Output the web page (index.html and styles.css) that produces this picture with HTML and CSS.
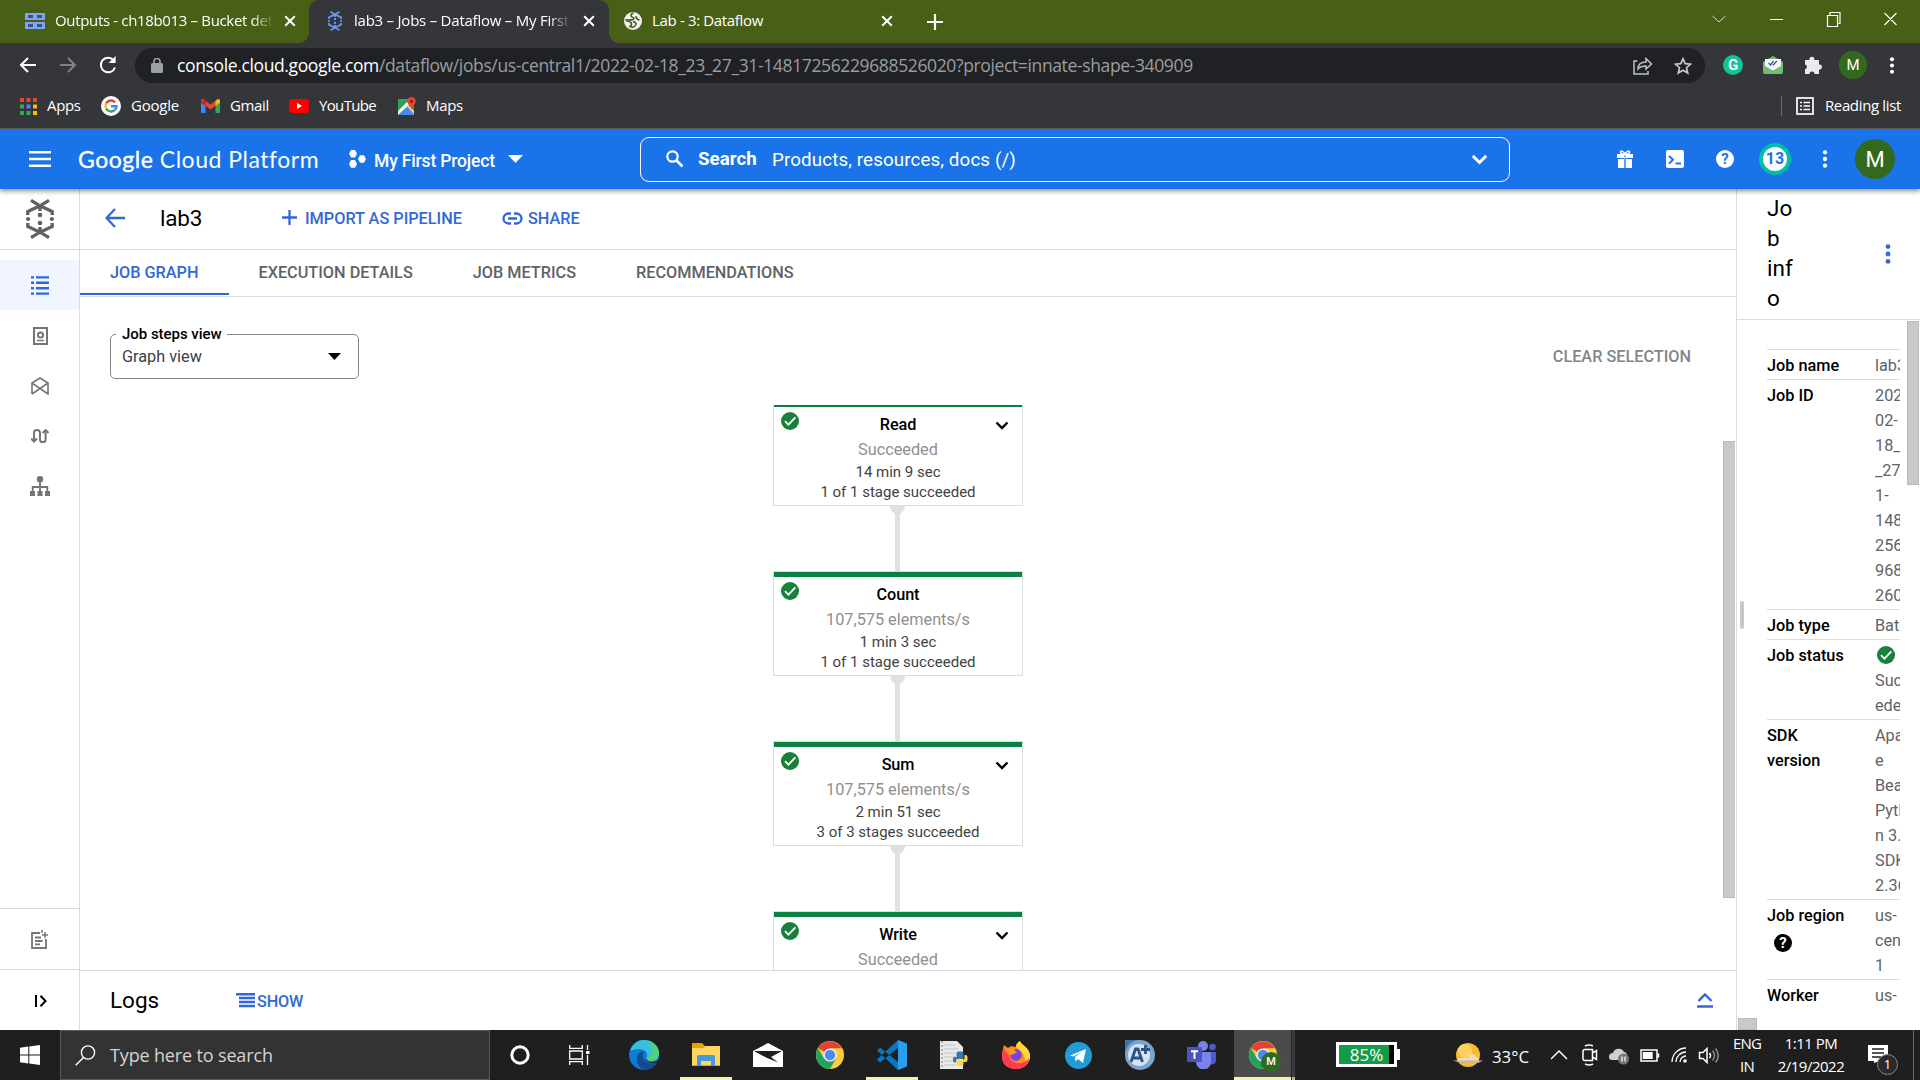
FILE: index.html
```html
<!DOCTYPE html>
<html lang="en">
<head>
<meta charset="utf-8">
<title>lab3 – Jobs – Dataflow</title>
<link rel="stylesheet" href="styles.css">
</head>
<body>
<svg class="defs" width="0" height="0">
  <symbol id="ok" viewBox="0 0 18 18"><circle cx="9" cy="9" r="9" fill="#188038"/><path d="M4 9.2l3.4 3.4L14.4 5.4" fill="none" stroke="#fff" stroke-width="1.8"/></symbol>
  <symbol id="x" viewBox="0 0 12 12"><path d="M1.2 1.2l9.6 9.6M10.8 1.2L1.2 10.8" stroke="#fff" stroke-width="2"/></symbol>
  <symbol id="chev" viewBox="0 0 14 9"><path d="M1.5 1.5L7 7l5.5-5.5" fill="none" stroke="currentColor" stroke-width="2.4"/></symbol>
  <symbol id="dots" viewBox="0 0 6 20"><g fill="currentColor"><circle cx="3" cy="2.6" r="2.4"/><circle cx="3" cy="10" r="2.4"/><circle cx="3" cy="17.4" r="2.4"/></g></symbol>
  <symbol id="flow" viewBox="0 0 28 40"><g fill="none" stroke="currentColor" stroke-width="3.3"><path d="M5 1.4L14 6.8 23 1.4M5 38.6L14 33.2l9 5.4"/><path d="M14 6.8L1.8 12.6V16M14 6.8l12.2 5.8V16M14 33.2L1.8 27.4V24M14 33.2l12.2-5.8V24M14 6.5V12M14 28v5.5"/></g><g fill="currentColor"><circle cx="2.1" cy="20" r="2.1"/><circle cx="25.9" cy="20" r="2.1"/><circle cx="14" cy="16" r="2.3"/><circle cx="14" cy="24" r="2.3"/></g></symbol>
  <symbol id="chrome" viewBox="0 0 28 28"><circle cx="14" cy="14" r="14" fill="#fdca40"/><path d="M14 14L1.9 7A14 14 0 0 1 26.1 7.3H14z" fill="#db4437"/><path d="M1.9 7A14 14 0 0 0 14 28l6-10.5L14 14 8 17.4z" fill="#1ea362"/><circle cx="14" cy="14" r="6.6" fill="#f1f1f1"/><circle cx="14" cy="14" r="5.2" fill="#4c8bf5"/></symbol>
</svg>

<header class="tabstrip">
  <div class="tab tab-one">
    <svg class="fav" width="20" height="16" viewBox="0 0 20 16"><g fill="#7fa5ee"><path d="M0 0h20v7H0zM0 9h20v7H0z"/></g><g fill="#3c4f88"><path d="M3 2h5v3H3zM12 2h5v3h-5zM3 11h5v3H3zM12 11h5v3h-5z"/></g></svg>
    <span class="tab-text fade">Outputs - ch18b013 – Bucket deta</span>
    <svg width="12" height="12"><use href="#x"/></svg>
  </div>
  <div class="tab tab-active">
    <svg class="fav blue" width="16" height="20"><use href="#flow"/></svg>
    <span class="tab-text fade">lab3 – Jobs – Dataflow – My First</span>
    <svg width="12" height="12"><use href="#x"/></svg>
  </div>
  <div class="tab tab-three">
    <svg class="fav" width="18" height="18" viewBox="0 0 18 18"><circle cx="9" cy="9" r="9" fill="#f1f3f4"/><path d="M9.500 1C6 2 6.500 5 9 5.500c1.500.4 1 2-.5 2.300-2 .3-3-.3-6.500.2 1 1.500 4 1 5 2.500s1 2.500-1 4c3 1.500 5 0 6-2 .8-1.600-1.500-2.500-3-3M12 4c0 2 1 3.500 3.500 4" fill="none" stroke="#495f15" stroke-width="1.600"/></svg>
    <span class="tab-text">Lab - 3: Dataflow</span>
    <svg width="12" height="12"><use href="#x"/></svg>
  </div>
  <svg class="plus" width="16" height="16" viewBox="0 0 16 16"><path d="M8 0v16M0 8h16" stroke="#fff" stroke-width="2.2"/></svg>
  <svg class="winctl" width="190" height="16" viewBox="0 0 190 16" fill="none" stroke="#fff"><path d="M6.500 5l6.500 6 6.500-6" stroke="#d5dacb"/><path d="M64 8.500h13M121.500 4.500h10v11h-10zM124 4V1.500h10v11h-2M178.500 2l12 12M190.500 2l-12 12" stroke-width="1.2"/></svg>
</header>

<div class="toolbar">
  <svg class="nav" width="96" height="20" viewBox="0 0 96 20" fill="none" stroke-width="2"><path d="M16 10H1M8 3l-7 7 7 7" stroke="#fff"/><path d="M40 10h15M48 3l7 7-7 7" stroke="#828386"/><path d="M93.500 5A7.300 7.300 0 1 0 95 12.500" stroke="#fff"/><path d="M95.600 1v7h-7z" fill="#fff"/></svg>
  <div class="omnibox">
    <svg width="12" height="15" viewBox="0 0 12 15"><rect y="5" width="12" height="10" rx="1.500" fill="#9aa0a6"/><path d="M3 6V3.500a3 3 0 0 1 6 0V6" fill="none" stroke="#9aa0a6" stroke-width="1.600"/></svg>
    <span class="url"><b>console.cloud.google.com</b>/dataflow/jobs/us-central1/2022-02-18_23_27_31-14817256229688526020?project=innate-shape-340909</span>
    <svg width="20" height="18" viewBox="0 0 20 18" fill="none" stroke="#bdc1c6" stroke-width="1.500"><path d="M4.500 4H1v13h14v-3M5 12c0-4.500 3-7 8-7V1.500L18.500 7 13 12V9c-3.500 0-6 .8-8 3z"/></svg>
    <svg width="18" height="18" viewBox="0 0 18 18" fill="none" stroke="#c5c8cc" stroke-width="1.700"><path d="M9 1.800l2.200 4.900 5.300.5-4 3.500 1.200 5.300L9 13.200 4.300 16l1.200-5.300-4-3.500 5.300-.5z"/></svg>
  </div>
  <span class="gram">G</span>
  <svg class="mailx" width="20" height="18" viewBox="0 0 20 18"><path d="M0 6L10 0l10 6v10a2 2 0 0 1-2 2H2a2 2 0 0 1-2-2z" fill="#6fbf73"/><path d="M2 3h16v7l-8 4.500L2 10z" fill="#f7f7fb"/><path d="M5.500 7l2 2 3-4M9.500 8.500l.8.500 3.500-4" fill="none" stroke="#4453b5" stroke-width="1.300"/></svg>
  <svg class="puzzle" width="19" height="19" viewBox="0 0 19 19"><path d="M1 4h4.500a2.500 2.500 0 1 1 4.800 0H15v4.600a2.500 2.500 0 1 1 0 4.900V18h-4.500a2.500 2.500 0 0 0-5 0H1v-4.800a2.400 2.400 0 0 0 0-4.700z" fill="#e8eaed"/></svg>
  <span class="avatar small">M</span>
  <svg class="white tdots" width="6" height="17"><use href="#dots"/></svg>
</div>

<div class="bookmarks">
  <svg width="17" height="17" viewBox="0 0 17 17"><path d="M0 0h4v4H0zM6.500 0h4v4h-4zM13 0h4v4h-4z" fill="#ea4335"/><path d="M0 6.500h4v4H0zM0 13h4v4H0zM6.500 13h4v4h-4z" fill="#34a853"/><path d="M6.500 6.500h4v4h-4z" fill="#4285f4"/><path d="M13 6.500h4v4h-4zM13 13h4v4h-4z" fill="#fbbc04"/></svg>
  <span class="bm bm-apps">Apps</span>
  <svg width="20" height="20" viewBox="0 0 20 20"><circle cx="10" cy="10" r="10" fill="#fff"/><g fill="none" stroke-width="2.500"><path d="M14 6.300A5.500 5.500 0 0 0 5.200 7.300" stroke="#ea4335"/><path d="M5.200 7.300a5.500 5.500 0 0 0 0 5.400" stroke="#fbbc04"/><path d="M5.200 12.700a5.500 5.500 0 0 0 8.400 1.400" stroke="#34a853"/><path d="M13.600 14.100A5 5 0 0 0 15.500 10.200H10" stroke="#4285f4"/></g></svg>
  <span class="bm bm-google">Google</span>
  <svg width="19" height="14" viewBox="0 0 19 14"><path d="M0 2v11a1 1 0 0 0 1 1h3.500V5z" fill="#4285f4"/><path d="M19 2v11a1 1 0 0 1-1 1h-3.500V5z" fill="#34a853"/><path d="M0 2C0 0 2 0 3 .7L9.500 5.500 16 .7C17 0 19 0 19 2l-.3 1.500L9.500 10.500.3 3.500z" fill="#ea4335"/><path d="M14.500 1.800L16 .7C17 0 19 0 19 2v1.500l-4.500 3.400z" fill="#fbbc04"/><path d="M0 2v1.500l4.500 3.400V1.800z" fill="#c5221f"/></svg>
  <span class="bm bm-gmail">Gmail</span>
  <svg width="20" height="14" viewBox="0 0 20 14"><rect width="20" height="14" rx="3.500" fill="#f00"/><path d="M8 4l5 3-5 3z" fill="#fff"/></svg>
  <span class="bm bm-yt">YouTube</span>
  <svg width="18" height="18" viewBox="0 0 18 18"><path d="M0 2h16v16H0z" fill="#2da05a"/><path d="M1 18L10 9l6 7v2z" fill="#4a89f3"/><path d="M0 14l9-9 2.500 2.500L0 18z" fill="#f5f5f5"/><path d="M9.500 10l1.500-1.500L16 14v3z" fill="#fdd663"/><path d="M13.500 0a4.200 4.200 0 0 1 4.200 4.200c0 3-3.400 4.300-4.200 8.300-.8-4-4.200-5.300-4.200-8.300A4.200 4.200 0 0 1 13.500 0z" fill="#ea4335"/><circle cx="13.500" cy="4.200" r="1.500" fill="#8c1a11"/></svg>
  <span class="bm">Maps</span>
  <div class="reading">
    <svg width="18" height="18" viewBox="0 0 18 18" fill="none" stroke="#fff" stroke-width="1.700"><rect x="1" y="1" width="16" height="16"/><path d="M4 5.500h2M4 9h2M4 12.500h2M7.500 5.500H14M7.500 9H14M7.500 12.500H14"/></svg>
    <span class="bm">Reading list</span>
  </div>
</div>

<div class="gcp">
  <svg width="22" height="16" viewBox="0 0 22 16"><path d="M0 1.300h22M0 8h22M0 14.700h22" stroke="#fff" stroke-width="2.400"/></svg>
  <span class="brand"><b>Google</b> Cloud Platform</span>
  <svg width="17" height="18" viewBox="0 0 17 18" fill="#fff"><path d="M2 0h4l2 3.800-2 3.800H2L0 3.800zM2 10h4l2 3.900-2 3.900H2L0 13.900zM11 5.200h4l2 3.800-2 3.800h-4L9 9z"/></svg>
  <span class="project">My First Project</span>
  <svg width="15" height="8" viewBox="0 0 15 8"><path d="M0 0h15L7.500 8z" fill="#fff"/></svg>
  <div class="search">
    <svg width="18" height="18" viewBox="0 0 18 18" fill="none" stroke="#fff"><circle cx="6.500" cy="6.500" r="5.200" stroke-width="2.200"/><path d="M10.500 10.500l6 6" stroke-width="2.600"/></svg>
    <b>Search</b><span>Products, resources, docs (/)</span>
    <svg class="white" width="17" height="11"><use href="#chev"/></svg>
  </div>
  <svg class="gift" width="16" height="18" viewBox="0 0 16 18"><path d="M0 4h16v4H0zM1 9h6.300v9H1zM8.700 9H15v9H8.700z" fill="#fff"/><path d="M8 5C5 4 3 3 3.500 1.800S7 1 8 4.500c1-3.500 4-3.900 4.500-2.700S11 4 8 5zM8 4v5" fill="none" stroke="#fff" stroke-width="1.500"/><path d="M7.600 5h.8v4h-.8z" fill="#1a73e8"/></svg>
  <svg class="shell" width="18" height="18" viewBox="0 0 18 18"><rect width="18" height="18" rx="2" fill="#fff"/><path d="M3 6l4 3.800-4 3.800M9.500 13.600H15" fill="none" stroke="#1a73e8" stroke-width="2"/></svg>
  <span class="help">?</span>
  <span class="count">13</span>
  <svg class="white gdots" width="6" height="18"><use href="#dots"/></svg>
  <span class="avatar big">M</span>
</div>

<main class="app">
  <nav class="side">
    <div class="side-head"><svg width="28" height="40"><use href="#flow"/></svg></div>
    <div class="side-list">
      <a class="on"><svg width="18" height="19" viewBox="0 0 18 19"><path d="M0 1.400h3M5 1.400h13M0 6.800h3M5 6.800h13M0 12.200h3M5 12.200h13M0 17.600h3M5 17.600h13" stroke="#3367d6" stroke-width="2.400"/></svg></a>
      <a><svg width="15" height="18" viewBox="0 0 15 18" fill="none" stroke="#757575" stroke-width="2"><path d="M1 1h13v16H1z"/><circle cx="7.500" cy="8" r="2.600"/><path d="M4 13.500h7" stroke-width="1.500"/></svg></a>
      <a><svg width="18" height="18" viewBox="0 0 18 18" fill="none" stroke="#757575" stroke-width="1.600"><path d="M1 17V6l8-5 8 5v11l-16-11M17 6L1 17"/></svg></a>
      <a><svg width="18" height="14" viewBox="0 0 18 14" fill="none" stroke="#757575" stroke-width="2"><path d="M3 13V4.500M3 11.500V4a3 3 0 0 1 6 0v6.500a2.800 2.800 0 0 0 5.600 0V2"/><path d="M0 9.500l3 3 3-3M11.600 4l3-3 3 3"/></svg></a>
      <a><svg width="20" height="20" viewBox="0 0 20 20"><g fill="#757575"><circle cx="10" cy="3.200" r="3.200"/><path d="M0 15h5v5H0zM7.500 15h5v5h-5zM15 15h5v5h-5z"/></g><path d="M10 4v12M2.700 16v-5h14.600v5" fill="none" stroke="#757575" stroke-width="1.800"/></svg></a>
    </div>
    <div class="side-notes"><svg width="17" height="19" viewBox="0 0 17 19" fill="none" stroke="#757575" stroke-width="1.800"><path d="M9 3H1v15h14V9M4 7.500h6M4 11h7.500M4 14.300h5"/><path d="M14 2v6M11 5h6M11 0v3" stroke-width="1.500"/></svg></div>
    <div class="side-toggle"><svg width="12" height="12" viewBox="0 0 12 12" fill="none" stroke="#000" stroke-width="2"><path d="M1 0v12M5.500.800l5 5.200-5 5.200"/></svg></div>
  </nav>

  <section class="center">
    <div class="titlebar">
      <svg width="20" height="20" viewBox="0 0 20 20" fill="none" stroke="#3367d6" stroke-width="2.300"><path d="M20 10H1.500M10 1L1.500 10 10 19"/></svg>
      <h1>lab3</h1>
      <svg width="15" height="15" viewBox="0 0 15 15"><path d="M7.500 0v15M0 7.500h15" stroke="#3367d6" stroke-width="2.300"/></svg>
      <span class="act act-import">IMPORT AS PIPELINE</span>
      <svg width="21" height="13" viewBox="0 0 21 13" fill="none" stroke="#3367d6" stroke-width="2.300"><path d="M9 1.500H6.500a5 5 0 0 0 0 10H9M12 1.500h2.500a5 5 0 0 1 0 10H12M6 6.500h9"/></svg>
      <span class="act">SHARE</span>
    </div>
    <div class="tabs"><span class="sel">JOB GRAPH</span><span>EXECUTION DETAILS</span><span>JOB METRICS</span><span>RECOMMENDATIONS</span></div>
    <div class="controls">
      <div class="select"><label>Job steps view</label><span>Graph view</span><svg width="13" height="7" viewBox="0 0 13 7"><path d="M0 0h13L6.500 7z"/></svg></div>
      <span class="clear">CLEAR SELECTION</span>
    </div>
    <div class="canvas">
      <div class="graph">
        <div class="node"><svg class="ok" width="18" height="18"><use href="#ok"/></svg><h2>Read</h2><svg class="chev" width="14" height="9"><use href="#chev"/></svg><p class="muted">Succeeded</p><p>14 min 9 sec</p><p>1 of 1 stage succeeded</p></div>
        <div class="link"></div>
        <div class="node"><svg class="ok" width="18" height="18"><use href="#ok"/></svg><h2>Count</h2><p class="muted">107,575 elements/s</p><p>1 min 3 sec</p><p>1 of 1 stage succeeded</p></div>
        <div class="link"></div>
        <div class="node"><svg class="ok" width="18" height="18"><use href="#ok"/></svg><h2>Sum</h2><svg class="chev" width="14" height="9"><use href="#chev"/></svg><p class="muted">107,575 elements/s</p><p>2 min 51 sec</p><p>3 of 3 stages succeeded</p></div>
        <div class="link"></div>
        <div class="node"><svg class="ok" width="18" height="18"><use href="#ok"/></svg><h2>Write</h2><svg class="chev" width="14" height="9"><use href="#chev"/></svg><p class="muted">Succeeded</p></div>
      </div>
      <div class="vscroll"></div>
    </div>
    <div class="logs">
      <h1>Logs</h1>
      <svg width="19" height="15" viewBox="0 0 19 15"><path d="M0 1.200h19M3 5h16M3 9h16M3 13h16" stroke="#3367d6" stroke-width="2.500"/></svg>
      <span class="act">SHOW</span>
      <svg class="collapse" width="16" height="16" viewBox="0 0 16 16" fill="none" stroke="#3367d6" stroke-width="2.400"><path d="M1.500 9L8 2.500 14.500 9M0 14.500h16"/></svg>
    </div>
  </section>

  <aside class="info">
    <div class="info-head"><h1>Jo<br>b<br>inf<br>o</h1><svg width="6" height="20"><use href="#dots"/></svg></div>
    <div class="info-body">
      <div class="grip"></div>
      <dl>
        <div><dt>Job name</dt><dd>lab3</dd></div>
        <div><dt>Job ID</dt><dd>2022-<br>02-<br>18_23<br>_27_3<br>1-<br>14817<br>25622<br>96885<br>26020</dd></div>
        <div><dt>Job type</dt><dd>Batch</dd></div>
        <div><dt>Job status</dt><dd><svg width="18" height="18"><use href="#ok"/></svg><br>Succe<br>eded</dd></div>
        <div><dt>SDK<br>version</dt><dd>Apach<br>e<br>Beam<br>Pytho<br>n 3.7<br>SDK<br>2.36.0</dd></div>
        <div><dt>Job region<br><i>?</i></dt><dd>us-<br>central<br>1</dd></div>
        <div><dt>Worker</dt><dd>us-</dd></div>
      </dl>
      <div class="iscroll"></div>
    </div>
    <div class="hscroll"></div>
  </aside>
</main>

<footer class="taskbar">
  <svg class="win" width="20" height="20" viewBox="0 0 20 20" fill="#fff"><path d="M0 2.800l8.300-1.200v8H0zM9.300 1.400L20 0v9.600H9.300zM0 10.500h8.300v8L0 17.300zM9.300 10.500H20V20L9.300 18.600z"/></svg>
  <div class="find"><svg width="21" height="21" viewBox="0 0 21 21" fill="none" stroke="#fff" stroke-width="1.400"><circle cx="13" cy="7.500" r="6.600"/><path d="M8.500 12.500L.7 20.300"/></svg><span>Type here to search</span></div>
  <svg class="i-cortana" width="20" height="20" viewBox="0 0 20 20"><circle cx="10" cy="10" r="8.200" fill="none" stroke="#fff" stroke-width="3"/></svg>
  <svg class="i-view" width="21" height="20" viewBox="0 0 21 20" fill="none" stroke="#fff" stroke-width="1.300"><path d="M.7 0v3.300h12.600V0M.7 20v-3.300h12.600V20M.7 6h12.600v8H.7zM18.500 0v5M18.500 10v10"/><path d="M17 6h3.500v3H17z" fill="#fff" stroke="none"/></svg>
  <div class="slot"><svg width="30" height="30" viewBox="0 0 30 30"><circle cx="15" cy="15" r="15" fill="#0c7bd3"/><path d="M1 11C4 3 9 0 15 0c9 0 15 6 15 13 0 6-4 8-8 8-4 0-5-2-4-4 1-4-2-8-8-8-4 0-7 1-9 2z" fill="#35c1dc"/><path d="M19 .6C26 3 30 8 30 13c0 6-4 8-8 8-4 0-5-2-4-4 6-1 8-6 1-16.400z" fill="#5bd45b" opacity=".75"/><path d="M28 22c-5 3-13 1-14-5-1-3 1-5 3-5-5-2-9 2-9 7 0 6 4 10 8 11 5 0 9-2 12-8z" fill="#134b94"/><path d="M29 22c-4 2-12 1-13-4 1 2 4 4 7 4 3 0 5-.7 6.500-2z" fill="#1f1f1f"/></svg></div>
  <div class="slot run"><svg width="28" height="24" viewBox="0 0 28 24"><path d="M0 0h10l3 3H28v20H0z" fill="#e8a200"/><path d="M0 5h11l3-2h14v19H0z" fill="#ffd661"/><path d="M5 23V14a2 2 0 0 1 2-2h14a2 2 0 0 1 2 2v9h-4v-5H9v5z" fill="#4599dc"/></svg></div>
  <div class="slot"><svg width="30" height="24" viewBox="0 0 30 24"><path d="M0 8L15 0l15 8v16H0z" fill="#fff"/><path d="M1 8h28L18 14l7 5.500L13 14.500z" fill="#1f1f1f"/></svg></div>
  <div class="slot"><svg width="28" height="28"><use href="#chrome"/></svg></div>
  <div class="slot run"><svg width="30" height="30" viewBox="0 0 30 30"><path d="M0 19.500L21 0v8L3 22.500zM0 10.500L21 30v-8L3 7.500z" fill="#0a76bd"/><path d="M21 0l9 3.500v23L21 30z" fill="#2a9df1"/></svg></div>
  <div class="slot"><svg width="28" height="28" viewBox="0 0 28 28"><path d="M0 0h17l6 6v22H0z" fill="#e9e9e9"/><path d="M3 4h12M4 8h14M4 12h11M4 16h9M4 20h9M4 24h12" stroke="#c4c4c4"/><path d="M2 0v28" stroke="#777" stroke-dasharray="2 2"/><path d="M16.500 16.500v-4a2 2 0 0 1 2-2h3a2 2 0 0 1 2 2v4a1.500 1.500 0 0 1-1.500 1.500h-4a2 2 0 0 0-2 2v1.500h-1a2 2 0 0 1-2-2v-2a2 2 0 0 1 2-2z" fill="#3a76a8"/><path d="M24.500 14h1a2 2 0 0 1 2 2v3a2 2 0 0 1-2 2h-2v2a2 2 0 0 1-2 2h-3a2 2 0 0 1-2-2v-2.500a1.500 1.500 0 0 1 1.500-1.500H22a2.500 2.500 0 0 0 2.500-2.500z" fill="#ffd33f"/></svg></div>
  <div class="slot"><svg width="28" height="28" viewBox="0 0 28 28"><path d="M2 4l4 3C8 5 11 5 14 6c0-3 2-5 4-6 1 4 9 6 10 14 1 8-6 14-14 14S0 22 0 15c0-4 1-8 2-11z" fill="#ff8a1e"/><path d="M18 0c1 4 9 6 10 14 0 5-2 8-5 11 1-7-1-14-9-19 0-3 2-5 4-6z" fill="#ffd83a"/><path d="M0 16c0 8 6 12 14 12s13-5 13-11c-4 7-18 8-20-3-4-3-5-5-5-8-1 3-2 6-2 10z" fill="#ff3b54"/><circle cx="14" cy="14" r="5.800" fill="#7542e5"/><path d="M6 8c4-1 7 1 9 4-3 0-5 3-8 1z" fill="#ff9a22"/></svg></div>
  <div class="slot"><svg width="27" height="27" viewBox="0 0 27 27"><circle cx="13.500" cy="13.500" r="13.500" fill="#239bd7"/><path d="M5 13.500L21 7l-3 14-5-4-2.500 2.500-.5-4.500 7-5.500-8.500 5z" fill="#fff"/></svg></div>
  <div class="slot"><svg width="30" height="30" viewBox="0 0 30 30"><path d="M0 0h15v15H0z" fill="#3d78ad"/><circle cx="15" cy="15" r="15" fill="#7da4cf"/><circle cx="14" cy="15" r="11" fill="#d7e3f1"/><path d="M6 22l4.500-13h2.500l4.500 13M8 18h7.500M16 9.500h9M20.500 5v9" fill="none" stroke="#27528a" stroke-width="2.800"/></svg></div>
  <div class="slot"><svg width="30" height="28" viewBox="0 0 30 28"><circle cx="16" cy="5" r="5" fill="#7b83eb"/><circle cx="25.500" cy="6" r="3.300" fill="#5059c9"/><path d="M20 11h9v8c0 5-5 5-7 4z" fill="#5059c9"/><path d="M9 11h15v10a7.500 7.500 0 0 1-15 0z" fill="#7b83eb"/><rect y="6" width="15" height="15" rx="1" fill="#4b53bc"/><path d="M4 10.300h7M7.500 10v8" stroke="#fff" stroke-width="1.900"/></svg></div>
  <div class="slot current"><svg width="28" height="28"><use href="#chrome"/></svg><span class="mini">M</span></div>
  <div class="edge"></div>
  <div class="battery"><span>85%</span></div>
  <svg class="i-sun" width="30" height="26" viewBox="0 0 30 26"><circle cx="15" cy="13" r="12" fill="#fdb92e"/><circle cx="12" cy="9" r="7" fill="#ffd25e"/><path d="M6 16h10a3.500 3.500 0 0 1 7-1c3 0 4 3 2 4H6c-2 0-2-3 0-3z" fill="#f3dcb8"/><path d="M0 18.500h30l-5 2.500H8z" fill="#cdb79b"/></svg>
  <span class="temp">33°C</span>
  <svg class="i-tray" width="168" height="24" viewBox="0 0 168 24" fill="none" stroke="#fff" stroke-width="1.500"><path d="M0 16l8-8 8 8"/><path d="M34 6.500h7.500v11H34a2 2 0 0 1-2-2v-7a2 2 0 0 1 2-2zM41.500 10l4-2.500v9l-4-2.500M34 3q4-2 8 0M34 21q4 2 8 0"/><path d="M58 14a4 4 0 0 1 4-4 6 6 0 0 1 11-1c4 0 4 8 0 8H61c-2 0-3-1-3-3z" fill="#d0d0d0" stroke="none"/><circle cx="72.500" cy="16" r="5.500" fill="#777" stroke="none"/><path d="M71 13.500v5M74 13.500v5" stroke-width="1.200"/><path d="M90 7h16v11H90zM107.500 10.500v4"/><path d="M91.700 9h10v7h-10z" fill="#fff" stroke="none"/><path d="M121 19A14 14 0 0 1 135 5M125 19a10 10 0 0 1 10-10M129 19a6 6 0 0 1 6-6" stroke-width="1.300"/><circle cx="134" cy="18" r="1.800" fill="#fff" stroke="none"/><path d="M148.500 9.500h3.500l4-4v14l-4-4h-3.500zM158.500 10q2 2.500 0 5"/><path d="M161.500 7.500q4 5 0 10M164.500 5.500q5.500 7 0 14" stroke="#888"/></svg>
  <div class="lang">ENG<br>IN</div>
  <div class="clock">1:11 PM<br>2/19/2022</div>
  <div class="note"><svg width="20" height="18" viewBox="0 0 20 18"><path d="M0 0h20v16h-9l-5 2v-2H0z" fill="#fff"/><path d="M4 4h12M4 8h12M4 12h9" stroke="#1f1f1f" stroke-width="1.500"/></svg><span>1</span></div>
</footer>
</body>
</html>
```
FILE: styles.css
```css
* { box-sizing: border-box; }
body { margin: 0; width: 1920px; height: 1080px; overflow: hidden; background: #fff; font-family: Roboto, sans-serif; font-size: 16.25px; color: #000; display: flex; flex-direction: column; }
svg { display: block; flex: none; }
svg.defs { position: absolute; }
h1, h2, p, dl, dd { margin: 0; font-weight: 400; }
b { font-weight: inherit; }
.white { color: #fff; }
.blue { color: #6f9bf5; }

/* browser tabs */
.tabstrip { height: 43px; flex: none; background: #495f15; display: flex; align-items: center; color: #fff; font: 15px "Open Sans", sans-serif; letter-spacing: -.34px; }
.tab { height: 43px; display: flex; align-items: center; padding-bottom: 1px; white-space: nowrap; }
.tab-one { width: 309px; padding-left: 25px; }
.tab-one .tab-text { width: 219px; margin: 0 10px 0 10px; }
.tab-active { width: 300px; padding-left: 18px; background: #35363a; border-radius: 10px 10px 0 0; position: relative; }
.tab-active::before, .tab-active::after { content: ""; position: absolute; bottom: 0; width: 10px; height: 10px; }
.tab-active::before { left: -10px; background: radial-gradient(circle at 0 0, #495f15 9.500px, #35363a 10px); }
.tab-active::after { right: -10px; background: radial-gradient(circle at 100% 0, #495f15 9.500px, #35363a 10px); }
.tab-active .tab-text { width: 217px; margin: 0 12px 0 11px; letter-spacing: -.23px; }
.tab-three { width: 298px; padding-left: 15px; position: relative; }
.tab-three::after { content: ""; width: 1px; height: 25px; background: #8a9870; margin-left: 14px; }
.tab-three .tab-text { width: 218px; margin: 0 11px 0 10px; }
.tab-text { overflow: hidden; flex: none; padding-bottom: 2px; }
.fade { -webkit-mask-image: linear-gradient(90deg, #000 90%, transparent); mask-image: linear-gradient(90deg, #000 90%, transparent); }
.plus { margin-left: 20px; }
.winctl { margin-left: 763px; margin-bottom: 6px; overflow: visible; }

/* address row */
.toolbar { height: 44px; flex: none; background: #35363a; display: flex; align-items: center; }
.nav { margin: 0 19px 0 20px; }
.omnibox { width: 1570px; height: 35px; border-radius: 18px; background: #202124; display: flex; align-items: center; padding: 0 13px 0 16px; margin: 1px 0 0; }
.url { flex: 1; padding: 0 0 1px 14px; color: #9a9da1; font: 17.5px "Open Sans", sans-serif; letter-spacing: -.368px; white-space: nowrap; }
.url b { color: #fff; }
.omnibox svg + svg { margin-left: 21px; }
.gram { width: 20px; height: 20px; margin-left: 18px; border-radius: 50%; background: #15c39a; color: #fff; font: 600 15px/20px Roboto, sans-serif; text-align: center; }
.mailx { margin-left: 20px; }
.puzzle { margin-left: 21px; }
.avatar { border-radius: 50%; background: #33691e; color: #fff; text-align: center; flex: none; }
.small { width: 28px; height: 28px; font-size: 15px; line-height: 28px; margin-left: 16px; }
.tdots { margin-left: 22px; }

.bookmarks { height: 42px; flex: none; background: #35363a; border-bottom: 1px solid #5c5d60; display: flex; align-items: center; padding-left: 20px; padding-bottom: 3px; color: #fff; font: 15px "Open Sans", sans-serif; letter-spacing: -.35px; }
.bm { margin-left: 10px; padding-bottom: 2px; white-space: nowrap; }
.bm-apps { width: 54px; }
.bm-google { width: 70px; letter-spacing: -.22px; }
.bm-gmail { width: 59px; }
.bm-yt { width: 79px; letter-spacing: -.65px; }
.reading { margin: 0 19px 0 auto; height: 20px; border-left: 1px solid #6b6c6f; padding-left: 14px; display: flex; align-items: center; }
.reading .bm { margin-left: 11px; }

/* console header */
.gcp { height: 60px; flex: none; background: #1a73e8; color: #fff; display: flex; align-items: center; padding-left: 29px; box-shadow: 0 2px 5px rgba(0,0,0,.45); position: relative; z-index: 2; }
.brand { width: 243px; margin: 0 28px 0 27px; font: 23px Lato, sans-serif; letter-spacing: .52px; white-space: nowrap; }
.brand b { font-weight: 400; -webkit-text-stroke: .4px #fff; }
.project { width: 122px; margin: 4px 12px 0 8px; font-size: 17.5px; font-weight: 500; letter-spacing: -.16px; white-space: nowrap; }
.search { width: 870px; height: 45px; margin-left: 117px; border: 1px solid #fff; border-radius: 9px; display: flex; align-items: center; padding: 0 21px 0 25px; font-size: 18.750px; white-space: nowrap; }
.search b { font-weight: 700; margin: 0 16px 0 14px; width: 58px; }
.search span { flex: 1; letter-spacing: .12px; padding-top: 2px; }
.gift { margin-left: 107px; }
.shell { margin-left: 33px; }
.help { width: 18px; height: 18px; margin-left: 32px; background: #fff; color: #1a73e8; border-radius: 50%; font: 700 15px/18px Roboto, sans-serif; text-align: center; }
.count { width: 32px; height: 32px; margin-left: 25px; border: 4px solid #00bfa5; border-radius: 50%; background: #fff; color: #1a73e8; font: 700 16px/24px Roboto, sans-serif; text-align: center; }
.gdots { margin-left: 31px; }
.big { width: 40px; height: 40px; margin-left: 27px; font-size: 22px; line-height: 41px; }

/* page body */
.app { height: 841px; flex: none; display: grid; grid-template-columns: 80px 1656px 184px; }
.side { border-right: 1px solid #dadce0; display: flex; flex-direction: column; }
.side > div { display: flex; align-items: center; justify-content: center; }
.side-head { height: 61px; border-bottom: 1px solid #dadce0; color: #616161; }
.side .side-list { flex: 1; flex-direction: column; justify-content: flex-start; padding-top: 10px; }
.side-list a { width: 79px; height: 50px; display: flex; align-items: center; justify-content: center; padding: 1px 0 0 1px; }
.side-list .on { background: #f0f5ff; }
.side-notes { height: 62px; border: solid #dadce0; border-width: 1px 0; }
.side-toggle { height: 60px; padding: 2px 0 0 3px; }
.center { display: flex; flex-direction: column; min-width: 0; }
.titlebar { height: 61px; border-bottom: 1px solid #dadce0; display: flex; align-items: center; padding: 0 0 2px 25px; white-space: nowrap; }
h1 { font-size: 22.500px; line-height: 30px; }
.titlebar h1 { width: 87px; margin-left: 35px; letter-spacing: -.2px; }
.titlebar h1 + svg { margin-left: 35px; margin-top: -2px; }
.act { color: #3367d6; font-weight: 500; margin-left: 8px; }
.act-import { width: 157px; margin-right: 40px; }
.titlebar .act:last-child { margin-left: 5px; }
.tabs { height: 47px; border-bottom: 1px solid #dadce0; display: flex; color: #5f6368; font-weight: 500; line-height: 46px; white-space: nowrap; }
.tabs span { padding: 0 30px; height: 46px; }
.tabs .sel { color: #3367d6; box-shadow: inset 0 -2px #3367d6; height: 45px; }
.controls { height: 108px; display: flex; justify-content: space-between; padding: 37px 45px 0 30px; }
.select { width: 249px; height: 45px; border: 1px solid #80868b; border-radius: 5px; display: flex; align-items: center; justify-content: space-between; padding: 0 17px 0 11px; color: #3c4043; position: relative; }
.select label { position: absolute; left: 5px; top: -11px; padding: 0 5px 0 6px; background: #fff; color: #000; font-size: 15px; font-weight: 500; line-height: 20px; letter-spacing: -.03px; }
.clear { color: #80868b; font-weight: 500; line-height: 46px; }
.canvas { height: 565px; overflow: hidden; display: flex; justify-content: space-between; padding-left: 693px; }
.graph { margin-top: -4px; width: 250px; }
.node { height: 105px; border: 1px solid #dadce0; background: #fff; text-align: center; position: relative; box-shadow: inset 0 5px #0b8043; line-height: 20px; padding-top: 12px; font-size: 15px; color: #424242; white-space: nowrap; }
.node h2 { font-size: 16.250px; font-weight: 500; line-height: 22px; color: #000; letter-spacing: -.1px; }
.node .muted { font-size: 16.250px; line-height: 28px; margin-bottom: -2px; color: #8f8f8f; }
.node .ok { position: absolute; left: 7px; top: 10px; }
.node .chev { position: absolute; right: 13px; top: 19px; color: #000; }
.link { height: 65px; width: 5px; margin: 0 0 0 122px; background: #e0e0e0; position: relative; }
.link::before { content: ""; position: absolute; left: -5px; top: 0; width: 15px; height: 7.500px; border-radius: 0 0 8px 8px; background: #e0e0e0; }
.vscroll { width: 12px; height: 457px; margin: 36px 1px 0 0; background: #c9c9c9; border: 1px solid #bababa; border-width: 1px 0 1px 1px; }
.logs { height: 60px; border-top: 1px solid #dadce0; display: flex; align-items: center; padding: 0 23px 0 30px; }
.logs h1 { width: 126px; padding-bottom: 2px; }
.logs .act { margin-left: 2px; padding-top: 2px; letter-spacing: -.2px; }
.collapse { margin-left: auto; margin-top: -2px; }

/* job info */
.info { border-left: 1px solid #dadce0; overflow: hidden; display: flex; flex-direction: column; }
.info-head { height: 131px; flex: none; border-bottom: 1px solid #dadce0; display: flex; justify-content: space-between; align-items: center; padding: 0 29px 1px 30px; color: #3367d6; }
.info-head h1 { color: #000; padding-bottom: 2px; }
.info-body { height: 697px; flex: none; display: grid; grid-template-columns: 30px 133px 20px; }
.grip { width: 4px; height: 28px; border-radius: 2px; background: #c8c8c8; margin: 281px 0 0 3px; }
dl { margin-top: 29px; height: 665px; overflow: hidden; font-size: 16.250px; line-height: 25px; }
dl div { display: grid; grid-template-columns: 108px 25px; border-top: 1px solid #dadce0; padding: 3px 0 1px; }
dt { font-weight: 500; }
dd { color: #5f6368; overflow: hidden; white-space: nowrap; }
dd svg { display: inline-block; vertical-align: -3px; margin-left: 2px; }
dt i { display: inline-block; width: 18px; height: 18px; margin: 6px 0 0 7px; border-radius: 50%; background: #000; color: #fff; font: 700 15px/18px Roboto, sans-serif; text-align: center; vertical-align: top; }
.iscroll { width: 12px; height: 164px; margin: 1px 0 0 7px; background: #c9c9c9; border: 1px solid #bababa; }
.hscroll { width: 19px; height: 12px; margin: 1px 0 0 1px; background: #c9c9c9; border: 1px solid #bababa; }

/* taskbar */
.taskbar { height: 50px; flex: none; background: #1f1f1f; color: #fff; display: flex; align-items: center; font: 15px "Open Sans", sans-serif; white-space: nowrap; }
.win { margin: 0 20px; }
.find { width: 430px; height: 50px; background: #333; border: 1px solid #5a5a5a; display: flex; align-items: center; padding-left: 14px; color: #d4d4d4; font-size: 18px; letter-spacing: -.15px; }
.find span { margin-left: 14px; }
.i-cortana { margin-left: 20px; }
.i-view { margin: 0 28px 0 39px; }
.slot { width: 52px; height: 50px; margin-right: 10px; display: flex; align-items: center; justify-content: center; flex: none; position: relative; }
.run, .current { box-shadow: inset 0 -3px #eff5b0; }
.current { width: 57px; background: #4b4b4b; margin: 0 0 0 -4px; }
.mini { position: absolute; left: 27px; top: 22px; width: 20px; height: 20px; border-radius: 50%; background: #33691e; font: 500 11px/20px Roboto, sans-serif; text-align: center; }
.edge { width: 4px; height: 50px; background: #3b3b3b; border-left: 1px solid #242424; box-shadow: inset 0 -3px #b6bb8b; }
.battery { width: 61px; height: 25px; margin-left: 41px; margin-top: -1px; border: 3px solid #fff; background: linear-gradient(90deg, #159a48 50px, #000 50px); position: relative; flex: none; font-size: 17px; line-height: 19px; text-align: center; }
.battery::after { content: ""; position: absolute; right: -6px; top: 4px; width: 3px; height: 11px; background: #fff; }
.i-sun { margin-left: 56px; }
.temp { width: 38px; margin: 3px 20px 0 9px; font-size: 16.800px; }
.i-tray { margin-left: 1px; }
.lang, .clock { text-align: center; line-height: 23px; }
.lang { width: 28px; margin-left: 14px; letter-spacing: -.8px; }
.clock { width: 76px; margin-left: 12px; letter-spacing: -.5px; }
.note { width: 46px; height: 50px; margin-left: 19px; border-right: 1px solid #666; position: relative; padding-top: 15px; }
.note span { position: absolute; left: 9px; top: 24px; width: 21px; height: 21px; border: 1px solid #888; border-radius: 50%; background: #2b2b2b; font-size: 13px; line-height: 19px; text-align: center; }
```
